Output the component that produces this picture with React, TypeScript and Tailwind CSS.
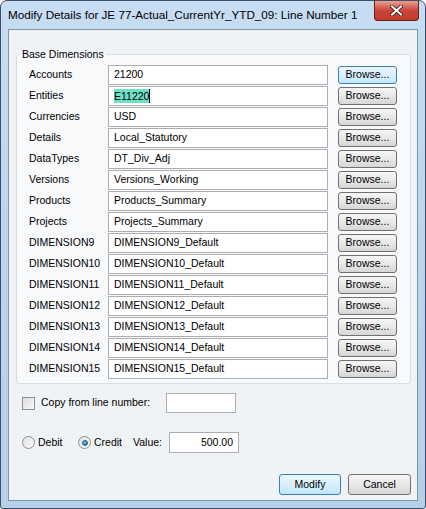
import React from "react";

const rows: { label: string; value: string }[] = [
    {label: "Accounts", value: "21200"},
    {label: "Entities", value: "E11220"},
    {label: "Currencies", value: "USD"},
    {label: "Details", value: "Local_Statutory"},
    {label: "DataTypes", value: "DT_Div_Adj"},
    {label: "Versions", value: "Versions_Working"},
    {label: "Products", value: "Products_Summary"},
    {label: "Projects", value: "Projects_Summary"},
    {label: "DIMENSION9", value: "DIMENSION9_Default"},
    {label: "DIMENSION10", value: "DIMENSION10_Default"},
    {label: "DIMENSION11", value: "DIMENSION11_Default"},
    {label: "DIMENSION12", value: "DIMENSION12_Default"},
    {label: "DIMENSION13", value: "DIMENSION13_Default"},
    {label: "DIMENSION14", value: "DIMENSION14_Default"},
    {label: "DIMENSION15", value: "DIMENSION15_Default"},
];

const WinButton = ({label, hot, className}: { label: string; hot?: boolean; className?: string }) => (
    <div
        className={
            "flex items-center justify-center rounded-[3px] border text-[#000] " +
            (hot
                ? "border-[#3c7fb1] bg-gradient-to-b from-[#eaf6fd] via-[#d9f0fc] to-[#bee6fd] "
                : "border-[#707070] bg-gradient-to-b from-[#f6f6f6] via-[#e8e8e8] to-[#d6d6d6] ") +
            (className || "")
        }
    >
        {label}
    </div>
);

const Radio = ({checked}: { checked?: boolean }) => (
    <span className="flex h-[13px] w-[13px] shrink-0 items-center justify-center rounded-full border border-[#8e8f8f] bg-gradient-to-br from-[#e0e0e0] to-[#fbfbfb]">
        {checked && (
            <span className="h-[6px] w-[6px] rounded-full border border-[#1a5a8a] bg-gradient-to-br from-[#7ecbf2] to-[#1b6fb0]"/>
        )}
    </span>
);

const App = () => {
    return (
        <div className="h-[509px] w-[426px] bg-white" style={{fontFamily: '"Liberation Sans", Arial, sans-serif'}}>
            <div className="relative flex h-full w-full flex-col rounded-t-[7px] rounded-b-[3px] border border-[#3d4f63] bg-gradient-to-b from-[#c7ddf3] via-[#bcd4ee] to-[#b6cfea]">
                <div className="flex h-[28px] shrink-0 items-start">
                    <span className="ml-[7px] mt-[5px] text-[11.7px] text-[#000]">
                        Modify Details for JE 77-Actual_CurrentYr_YTD_09: Line Number 1
                    </span>
                    <div className="ml-auto mr-[6px] flex h-[20px] w-[45px] items-center justify-center rounded-b-[4px] border border-t-0 border-[#6b1a14] bg-gradient-to-b from-[#e8a093] via-[#c8463a] to-[#c43a2a]">
                        <svg width="13" height="11" viewBox="0 0 13 11">
                            <path d="M2 1.5 L11 9.5 M11 1.5 L2 9.5" stroke="#3a1410" strokeWidth="3.6" strokeLinecap="square"/>
                            <path d="M2 1.5 L11 9.5 M11 1.5 L2 9.5" stroke="#ffffff" strokeWidth="2" strokeLinecap="square"/>
                        </svg>
                    </div>
                </div>

                <div className="mx-[7px] mb-[7px] flex flex-1 flex-col border border-[#7f93a9] bg-[#f0f3f6] text-[10.5px] text-[#000]">
                    <fieldset className="mx-[7px] mt-[17px] rounded-[3px] border border-[#d5dfe5] bg-[#f7f9fb] pb-[4px] pl-[12px] pr-[13px] pt-[4px]">
                        <legend className="ml-[-9px] px-[2px] leading-[14px]">Base Dimensions</legend>
                        <div className="flex flex-col gap-[1px]">
                            {rows.map((row) => (
                                <div key={row.label} className="flex h-[20px] items-center">
                                    <span className="w-[79px]">{row.label}</span>
                                    <div className="flex h-[20px] w-[220px] items-center border border-[#abadb3] bg-white pl-[5px]">
                                        {row.label === "Entities" ? (
                                            <>
                                                <span className="bg-[#6fe0c8] leading-[14px]">{row.value}</span>
                                                <span className="h-[14px] w-[1px] bg-black"/>
                                            </>
                                        ) : (
                                            row.value
                                        )}
                                    </div>
                                    <WinButton
                                        label="Browse..."
                                        hot={row.label === "Accounts"}
                                        className="ml-[10px] h-[18px] w-[59px]"
                                    />
                                </div>
                            ))}
                        </div>
                    </fieldset>

                    <div className="ml-[13px] mt-[9px] flex h-[20px] items-center">
                        <span className="h-[13px] w-[13px] shrink-0 border border-[#8e8f8f] bg-gradient-to-br from-[#dcdcdc] to-[#fafafa]"/>
                        <span className="ml-[6px] w-[125px]">Copy from line number:</span>
                        <div className="h-[20px] w-[70px] border border-[#abadb3] bg-white"/>
                    </div>

                    <div className="ml-[13px] mt-[19px] flex h-[21px] items-center">
                        <Radio/>
                        <span className="ml-[3px] w-[40px]">Debit</span>
                        <Radio checked/>
                        <span className="ml-[3px] w-[39px]">Credit</span>
                        <span className="w-[36px]">Value:</span>
                        <div className="flex h-[21px] w-[70px] items-center justify-end border border-[#abadb3] bg-white pr-[5px]">
                            500.00
                        </div>
                    </div>

                    <div className="mr-[6px] mt-auto mb-[5px] flex justify-end gap-[7px]">
                        <WinButton label="Modify" hot className="h-[21px] w-[62px]"/>
                        <WinButton label="Cancel" className="h-[21px] w-[63px]"/>
                    </div>
                </div>
            </div>
        </div>
    );
};

export default App;
